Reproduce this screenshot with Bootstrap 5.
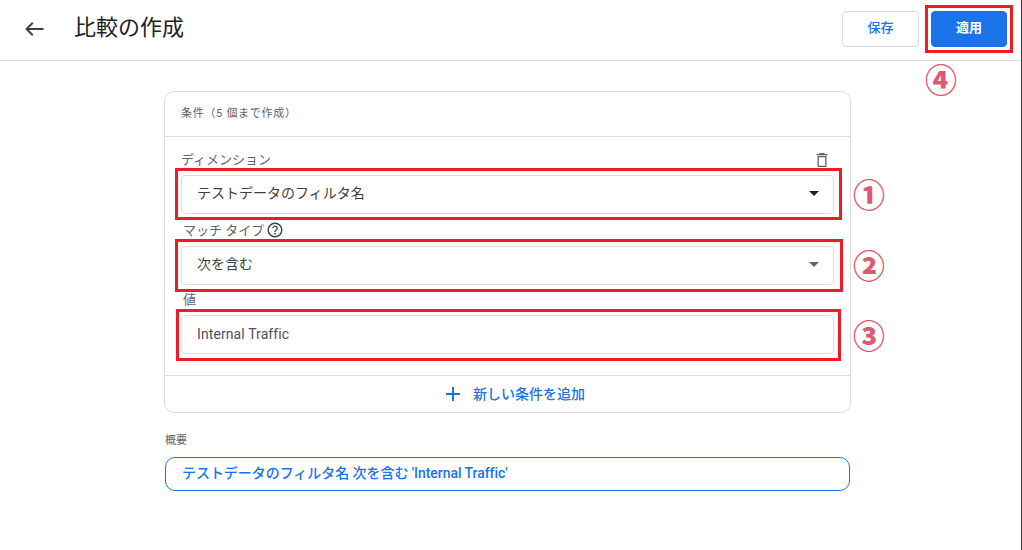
<!DOCTYPE html>
<html lang="ja">
<head>
<meta charset="utf-8">
<title>比較の作成</title>
<link href="https://cdn.jsdelivr.net/npm/bootstrap@5.3.0/dist/css/bootstrap.min.css" rel="stylesheet">
<style>
html, body { height: 100%; }
body { font-family: Roboto, "Noto Sans CJK JP", sans-serif; color: #3c4043; background: #fff; overflow: hidden; border-right: 1px solid #3c4043; }
.top-bar { height: 61px; border-bottom: 1px solid #dadce0; padding: 11px 14px 0 24px; }
.back-icon { width: 20px; height: 16px; margin-top: 10px; margin-right: 30px; }
.page-title { font-size: 22px; font-weight: 400; line-height: 34px; color: #202124; margin: 0; }
.btn-save, .btn-apply { width: 77px; height: 36px; font-size: 13px; font-weight: 700; border-radius: 4px; padding: 0 0 2px; }
.btn-save { background: #fff; color: #1a73e8; border: 1px solid #dadce0; margin-right: 12px; font-weight: 500; }
.btn-apply { width: 76px; background: #1a73e8; color: #fff; border: 1px solid #1a73e8; }
.content-col { width: 687px; margin-left: 164px; padding-top: 30px; }
.cond-card { border: 1px solid #dadce0; border-radius: 10px; height: 322px; }
.cond-head { height: 45px; border-bottom: 1px solid #dadce0; padding-left: 16px; font-size: 11px; line-height: 43px; color: #5f6368; letter-spacing: .7px; }
.cond-body { height: 239px; padding: 13px 16px 0; border-bottom: 1px solid #dadce0; }
.fld-second { margin-top: 7px; }
.fld-third { margin-top: 5px; }
.fld-label { height: 25px; font-size: 13px; line-height: 19px; color: #5f6368; }
.fld-label .trash { width: 16px; height: 16px; margin-right: 4px; margin-top: 2px; }
.fld-label .help { width: 16px; height: 16px; margin-left: 3px; margin-top: 1px; }
.label-shift { margin-left: 2px; }
.fld-box { height: 39px; border: 1px solid #dadce0; border-radius: 4px; padding: 0 15px 2px; font-size: 14px; color: #3c4043; }
.val-box { padding-bottom: 0; }
.val-text { letter-spacing: .1px; color: #4d5156; }
.caret-mark { width: 0; height: 0; border-left: 5px solid transparent; border-right: 5px solid transparent; border-top: 5px solid #202124; margin-right: -1px; }
.caret-grey { border-top-color: #5f6368; }
.mark-box { position: absolute; border: 3px solid #ee1c25; pointer-events: none; }
.mark-one { inset: -8px -9px -7px -7px; }
.mark-two { inset: -8px -10px -8px -7px; }
.mark-three { inset: -7px -8px -8px -6px; }
.num-mark { position: absolute; left: 100%; margin-left: 20px; top: 50%; transform: translateY(calc(-50% - 2.5px)); color: #dc5a72; font-family: "Noto Sans CJK JP", sans-serif; font-size: 32px; font-weight: 900; line-height: 1; }
.val-box .num-mark { transform: translateY(calc(-50% - 1.5px)); }
.add-row { height: 36px; padding-left: 15px; font-size: 14px; font-weight: 500; color: #1a73e8; }
.add-row svg { width: 16px; height: 16px; margin-right: 12px; }
.sum-label { font-size: 11px; color: #5f6368; margin: 20px 0 0 1px; line-height: 16px; }
.sum-box { margin: 8px 1px 0; height: 34px; border: 1px solid #1a73e8; border-radius: 10px; padding-left: 16px; font-size: 14px; font-weight: 500; line-height: 30px; color: #1a73e8; letter-spacing: -.05px; }
.apply-wrap { position: relative; }
.mark-apply { top: -6px; bottom: -6px; left: -6px; right: -6px; }
.num-apply { position: absolute; top: 100%; left: -6px; margin-top: 15px; color: #dc5a72; font-family: "Noto Sans CJK JP", sans-serif; font-size: 32px; font-weight: 900; line-height: 1; }
</style>
</head>
<body>
<header class="top-bar d-flex align-items-start">
  <svg class="back-icon" viewBox="0 0 20 16" aria-hidden="true"><path d="M19.500 8H2.500M8.800 1.800 2.500 8l6.300 6.200" fill="none" stroke="#3c4043" stroke-width="2"/></svg>
  <h1 class="page-title">比較の作成</h1>
  <div class="ms-auto d-flex">
    <button type="button" class="btn btn-save">保存</button>
    <div class="apply-wrap">
      <button type="button" class="btn btn-apply">適用</button>
      <span class="mark-box mark-apply"></span>
      <span class="num-apply">④</span>
    </div>
  </div>
</header>
<main class="content-col">
  <section class="card cond-card">
    <div class="cond-head">条件（5 個まで作成）</div>
    <div class="cond-body">
      <div>
        <div class="fld-label d-flex justify-content-between">
          <span>ディメンション</span>
          <svg class="trash" viewBox="0 0 16 16" aria-hidden="true"><path d="M5.500 1h5v1H13.500v1.300H2.500V2H5.500zM3.500 4h9v11h-9zM4.800 5.200v8.600h6.400V5.200z" fill="#5f6368" fill-rule="evenodd"/></svg>
        </div>
        <div class="fld-box position-relative d-flex align-items-center justify-content-between">
          <span>テストデータのフィルタ名</span><span class="caret-mark"></span>
          <span class="mark-box mark-one"></span>
          <span class="num-mark">①</span>
        </div>
      </div>
      <div class="fld-second">
        <div class="fld-label d-flex align-items-start">
          <span class="label-shift">マッチ タイプ</span>
          <svg class="help" viewBox="0 0 16 16" aria-hidden="true"><circle cx="8" cy="8" r="6.800" fill="none" stroke="#3c4043" stroke-width="1.400"/><path d="M5.900 6.300a2.100 2.100 0 1 1 3.300 1.700c-.8.500-1.200.9-1.200 1.900" fill="none" stroke="#3c4043" stroke-width="1.400"/><circle cx="8" cy="11.700" r=".9" fill="#3c4043"/></svg>
        </div>
        <div class="fld-box position-relative d-flex align-items-center justify-content-between">
          <span>次を含む</span><span class="caret-mark caret-grey"></span>
          <span class="mark-box mark-two"></span>
          <span class="num-mark">②</span>
        </div>
      </div>
      <div class="fld-third">
        <div class="fld-label"><span class="label-shift">値</span></div>
        <div class="fld-box val-box position-relative d-flex align-items-center">
          <span class="val-text">Internal Traffic</span>
          <span class="mark-box mark-three"></span>
          <span class="num-mark">③</span>
        </div>
      </div>
    </div>
    <div class="add-row d-flex align-items-center justify-content-center">
      <svg viewBox="0 0 16 16" aria-hidden="true"><path d="M8 1v14M1 8h14" stroke="#1a73e8" stroke-width="2" fill="none"/></svg>
      <span>新しい条件を追加</span>
    </div>
  </section>
  <div class="sum-label">概要</div>
  <div class="sum-box">テストデータのフィルタ名 次を含む 'Internal Traffic'</div>
</main>
</body>
</html>
